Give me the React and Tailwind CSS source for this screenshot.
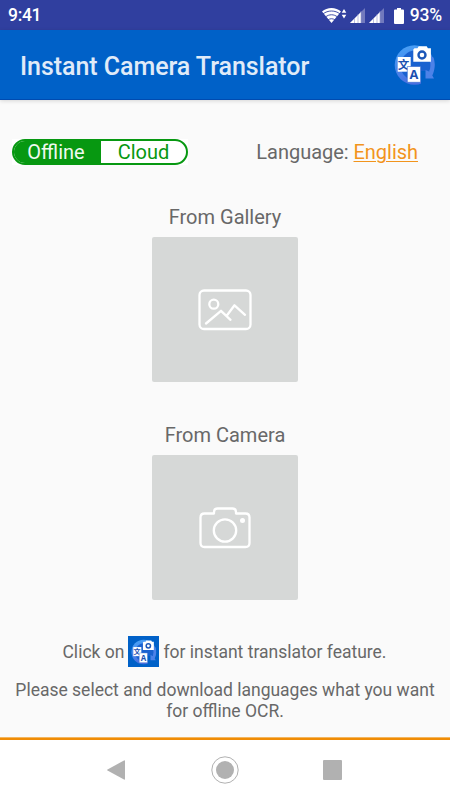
import React, { useState } from 'react';

const TranslateLogo = ({ className }) => (
  <svg viewBox="0 0 42 42" className={className}>
    <defs>
      <linearGradient id="ring" x1="0" y1="0" x2="0.3" y2="1">
        <stop offset="0" stopColor="#48a5f8" />
        <stop offset="1" stopColor="#4a6fe0" />
      </linearGradient>
    </defs>
    <circle cx="20.5" cy="21" r="19.8" fill="url(#ring)" />
    <circle cx="21.5" cy="21.5" r="15" fill="#1a62d0" />
    <path d="M27 27h15v15H27z" fill="#0061c8" />
    <path d="M35 12c2.500 5 2.500 10.500.2 15.500l-3.700-1.500v8.500h8.500l-1.700-3c2.700-5 3.200-12.500 1.200-18z" fill="#4d82e8" />
    <path d="M3.700 13h13v14.700h-13z" fill="#fff" />
    <text x="9.600" y="24.800" fontSize="11.500" fontWeight="700" textAnchor="middle" fill="#1b50b0" fontFamily="Noto Sans CJK SC, sans-serif">文</text>
    <path d="M20.500 4.300h3l1.200-2h8l1.200 2h3v13.500H19.300V5.500z" fill="#fff" />
    <circle cx="28" cy="11" r="3.500" fill="#fff" stroke="#1b57b8" strokeWidth="2.400" />
    <path d="M13.300 22.500h13.300v15.800H13.300z" fill="#fff" stroke="#2c62cc" strokeWidth=".6" />
    <text x="20" y="35" fontSize="12.800" fontWeight="700" textAnchor="middle" fill="#1b50b0" fontFamily="Open Sans, sans-serif">A</text>
  </svg>
);

const SignalIcon = () => (
  <svg viewBox="0 0 15 15" className="h-[15px] w-[15px]">
    <path d="M0 15 15 0v15z" fill="#7179bd" />
    <path d="M0 15 11 4v11z" fill="#fff" />
    <path d="M4.500 10v5M8 6v9M11 3v12" stroke="#8d93ca" strokeWidth=".6" />
  </svg>
);

const StatusBar = () => (
  <div className="flex h-[30px] shrink-0 items-center bg-[#303f9f] pl-2 pr-2 pt-px text-white">
    <span className="text-[17.500px] leading-none tracking-[-0.3px] font-medium">9:41</span>
    <div className="ml-auto flex items-center">
      <svg viewBox="0 0 25 17" className="h-[17px] w-[25px]">
        <path d="M0 4.500C5-.2 14-.2 19 4.500L9.500 16z" fill="#fff" />
        <path d="M1 7c4.500-4 12.500-4 17 0M3.500 10c3.500-3 8.500-3 12 0M6 13c2-1.700 5-1.700 7 0" fill="none" stroke="#303f9f" strokeWidth=".9" />
        <path d="m22 2 2.300 3.800h-4.600zM22 11.500l2.300-3.800h-4.600z" fill="#fff" />
      </svg>
      <div className="ml-[3px] flex gap-1">
        <SignalIcon />
        <SignalIcon />
      </div>
      <svg viewBox="0 0 10 16" className="ml-[10px] h-4 w-[10px]">
        <path d="M3 0h4v1.500h2q1 0 1 1V15q0 1-1 1H1q-1 0-1-1V2.500q0-1 1-1h2z" fill="#fff" />
      </svg>
      <span className="ml-[6px] text-[17.500px] leading-none tracking-[-0.2px] font-medium">93%</span>
    </div>
  </div>
);

const Header = () => (
  <header className="flex h-[70px] shrink-0 items-center justify-between border-b border-[#004bb0] bg-[#0061c8] pl-5 pr-[14px] shadow-[0_1px_4px_rgba(0,0,0,0.15)]">
    <h1 className="pt-[3px] text-[25px] leading-none tracking-[-0.05px] font-medium text-[#e0ebf8]">Instant Camera Translator</h1>
    <TranslateLogo className="h-[42px] w-[42px]" />
  </header>
);

const ModeToggle = ({ mode, onChange }) => (
  <div className="bg-white">
    <div className="flex h-[26px] w-[176px] overflow-hidden rounded-full border-2 border-[#079811] text-[20px] leading-[23px]">
      <button
        onClick={() => onChange('offline')}
        className={mode === 'offline' ? 'w-[87px] pr-[3px] bg-[#079811] text-[#effaf0]' : 'w-[87px] pr-[3px] text-[#079811]'}
      >
        Offline
      </button>
      <button
        onClick={() => onChange('cloud')}
        className={mode === 'cloud' ? 'flex-1 bg-[#079811] text-[#effaf0]' : 'flex-1 text-[#079811]'}
      >
        Cloud
      </button>
    </div>
  </div>
);

const SourceCard = ({ label, children }) => (
  <div className="flex flex-col items-center">
    <span className="text-[20px] leading-6">{label}</span>
    <button className="mt-[8px] mr-px flex h-[145px] w-[146px] items-center justify-center rounded-[2px] bg-[#d6d8d7]">
      {children}
    </button>
  </div>
);

const NavBar = () => (
  <nav className="flex h-[60px] shrink-0 items-center bg-white pl-[107px] text-[#b1b1b1]">
    <svg viewBox="0 0 18 20" className="h-5 w-[18px]">
      <path d="M17 .5q1-.5 1 .5v18q0 1-1 .5L.5 10.600q-.8-.6 0-1.200z" fill="currentColor" />
    </svg>
    <svg viewBox="0 0 28 28" className="ml-[86px] h-7 w-7">
      <circle cx="14" cy="14" r="13.200" fill="none" stroke="currentColor" />
      <circle cx="14" cy="14" r="9" fill="currentColor" />
    </svg>
    <div className="ml-[84px] h-5 w-[19px] rounded-[1px] bg-[#b1b1b1]" />
  </nav>
);

export default function App() {
  const [mode, setMode] = useState('offline');

  return (
    <div className="flex h-[800px] w-[450px] flex-col overflow-hidden bg-[#fafafa] font-[Roboto,sans-serif] text-[#686868]">
      <StatusBar />
      <Header />
      <main className="flex flex-1 flex-col">
        <div className="flex items-center justify-between pl-3 pr-8 pt-[38px]">
          <ModeToggle mode={mode} onChange={setMode} />
          <p className="pt-px text-[20px] leading-[26px] tracking-[-0.03px]">
            Language: <a className="text-[#f2941c] underline decoration-1 underline-offset-[2px]">English</a>
          </p>
        </div>

        <div className="mt-[40px] flex flex-col gap-[41px]">
          <SourceCard label="From Gallery">
            <svg viewBox="0 0 54 42" className="h-[42px] w-[54px]" fill="none" stroke="#fff" strokeWidth="2.300" strokeLinecap="round" strokeLinejoin="round">
              <rect x="1.500" y="1.500" width="51" height="38.500" rx="4.500" />
              <circle cx="15.800" cy="15.200" r="4.500" />
              <path d="m8 34.500 15-12.700 9.500 9M28.500 27l8-10.700 10.500 9.500" />
            </svg>
          </SourceCard>
          <SourceCard label="From Camera">
            <svg viewBox="0 0 52 42" className="h-[42px] w-[52px]" fill="none" stroke="#fff" strokeWidth="2.300" strokeLinejoin="round">
              <path d="M5.500 6.500H15V5q0-3.500 3.500-3.500h15Q37 1.500 37 5v1.500h9.500q4 0 4 4v25.500q0 4-4 4h-41q-4 0-4-4V10.500q0-4 4-4z" />
              <circle cx="26" cy="23.500" r="11.200" />
              <circle cx="43.500" cy="13.500" r="2.500" fill="#fff" stroke="none" />
            </svg>
          </SourceCard>
        </div>

        <p className="mt-[36px] flex h-[31px] items-center justify-center gap-1 pr-px text-[17.500px] leading-[31px]">
          <span className="pt-0.5">Click on</span>
          <span className="flex h-[31px] w-[31px] items-center justify-center bg-[#0061c8]">
            <TranslateLogo className="h-[26px] w-[26px]" />
          </span>
          <span className="pt-0.5">for instant translator feature.</span>
        </p>
        <p className="mt-[13px] px-3 text-center text-[17.500px] leading-[20.500px]">
          Please select and download languages what you want for offline OCR.
        </p>
      </main>
      <div className="h-[3px] shrink-0 border-t border-[#f3b65e] bg-[#f08c05]" />
      <NavBar />
    </div>
  );
}
